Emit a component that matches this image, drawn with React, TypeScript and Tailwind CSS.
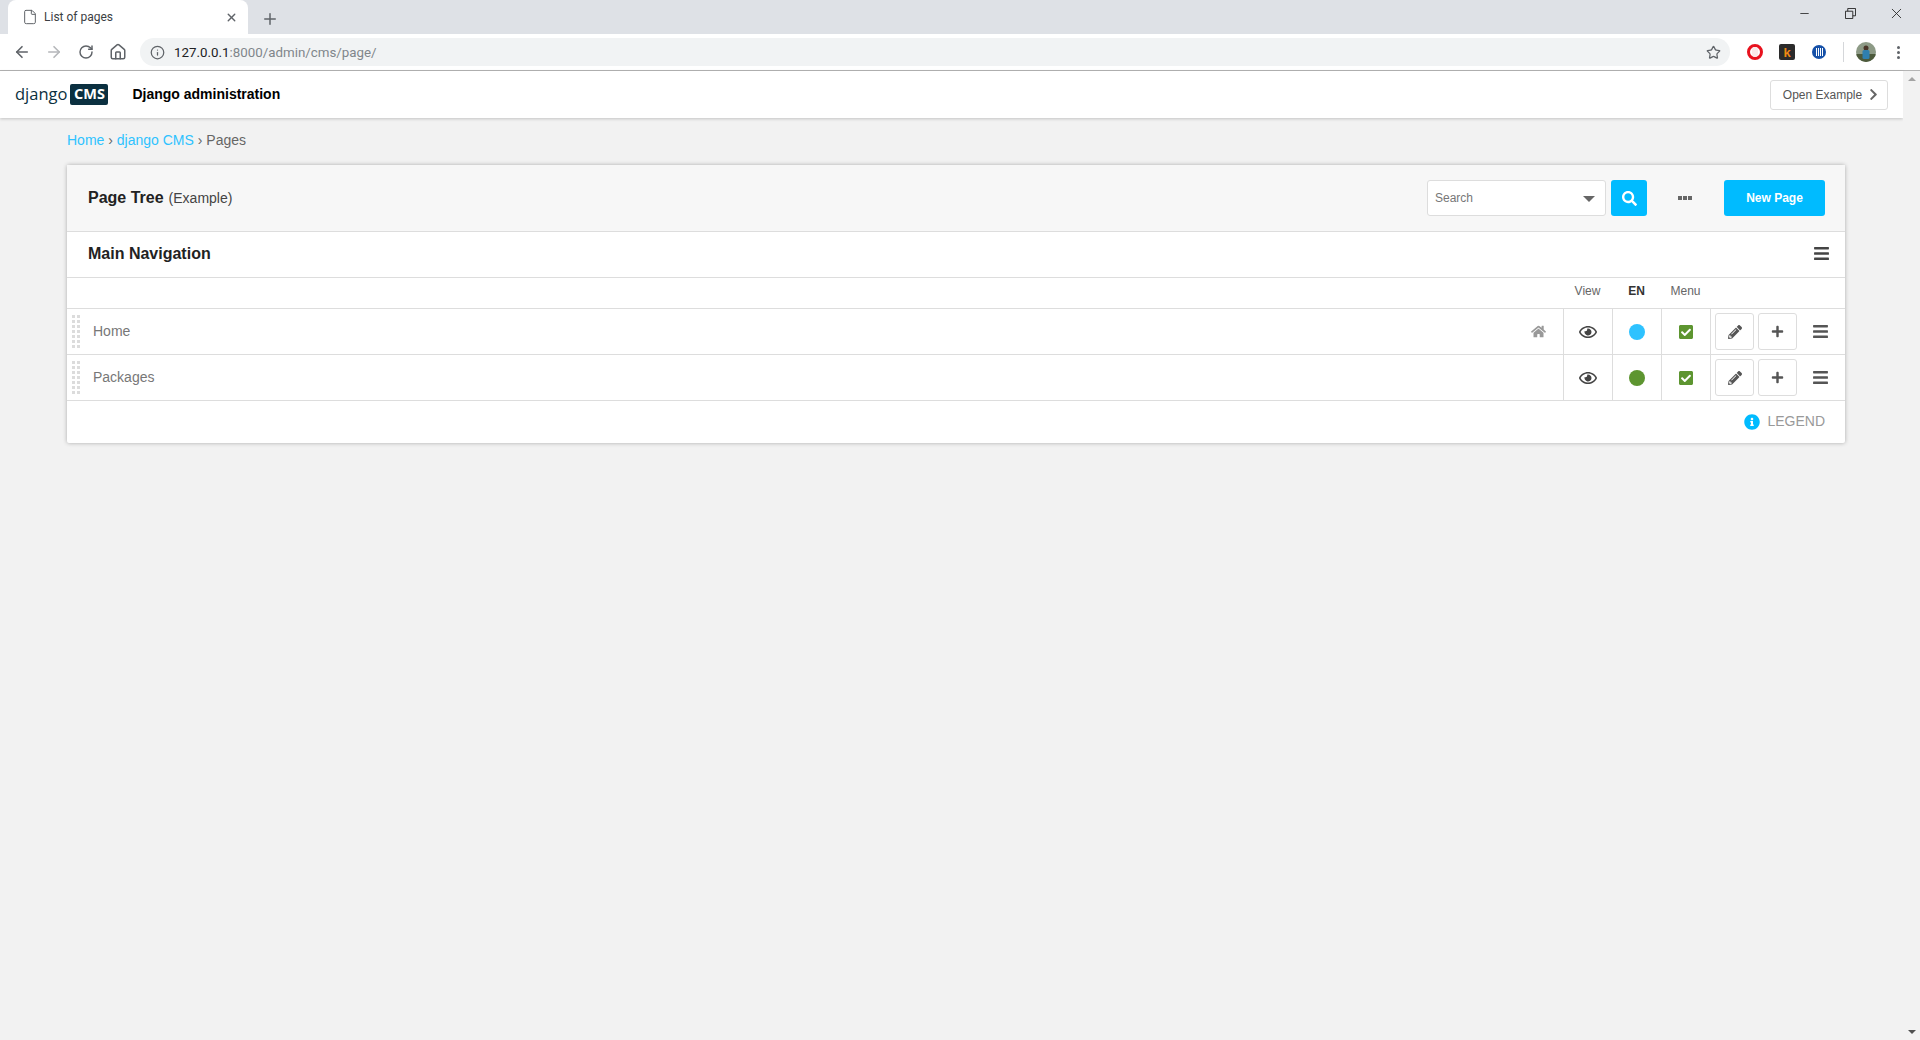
import { ArrowLeft, ArrowRight, File, Home, Info, Minus, Plus, RotateCw, Star, X } from "lucide-react";
import {
  FaBars,
  FaCheckSquare,
  FaChevronRight,
  FaHome,
  FaInfoCircle,
  FaPencilAlt,
  FaPlus,
  FaRegEye,
  FaSearch,
} from "react-icons/fa";

const sans = "font-['Liberation_Sans',Arial,sans-serif]";

// ─── Browser chrome ─────────────────────────────────────
function TabStrip() {
  return (
    <div className="flex h-[34px] items-end bg-[#dee1e6] pl-2">
      <div className="flex h-[34px] w-[240px] items-center rounded-t-[8px] bg-white pl-[14px] pr-[10px]">
        <File className="h-[16px] w-[16px] text-[#5f6368]" strokeWidth={1.5} />
        <span className="ml-[6px] flex-1 font-['Roboto',sans-serif] text-[12px] text-[#3c4043]">List of pages</span>
        <X className="h-[13px] w-[13px] text-[#5f6368]" strokeWidth={2.5} />
      </div>
      <Plus className="mb-[6px] ml-[13px] h-[18px] w-[18px] text-[#5f6368]" strokeWidth={2} />
      <div className="flex-1" />
      <div className="mb-[7px] flex items-center self-stretch">
        <Minus className="mr-[34px] h-[13px] w-[13px] text-[#222]" strokeWidth={1.5} />
        <svg viewBox="0 0 12 12" className="mr-[32px] h-[11px] w-[11px] text-[#222]" fill="none" stroke="currentColor">
          <path d="M.5 3.5h8v8h-8zM3 3.5V.5h8.5v8H8.5" />
        </svg>
        <X className="mr-[15px] h-[17px] w-[17px] text-[#222]" strokeWidth={1.2} />
      </div>
    </div>
  );
}

function ToolBar() {
  return (
    <div className="flex h-[37px] items-center border-b border-[#b4b4b4] bg-white pl-[13px]">
      <ArrowLeft className="h-[18px] w-[18px] text-[#5f6368]" strokeWidth={2.2} />
      <ArrowRight className="ml-[14px] h-[18px] w-[18px] text-[#b5b7ba]" strokeWidth={2.2} />
      <RotateCw className="ml-[15px] h-[16px] w-[16px] text-[#5f6368]" strokeWidth={2.2} />
      <Home className="ml-[15px] h-[18px] w-[18px] text-[#5f6368]" strokeWidth={2} />
      <div className="ml-[13px] flex h-[28px] w-[1590px] items-center rounded-full bg-[#f1f3f4] pl-[10px] pr-[9px]">
        <Info className="h-[15px] w-[15px] text-[#5f6368]" strokeWidth={2} />
        <span className="ml-[9px] mt-px flex-1 font-['Roboto',sans-serif] text-[13.33px] text-[#80868b]">
          <span className="text-[#202124]">127.0.0.1</span>:8000/admin/cms/page/
        </span>
        <Star className="h-[15px] w-[15px] text-[#5f6368]" strokeWidth={2} />
      </div>
      <div className="ml-[17px] flex h-[16px] w-[16px] items-center justify-center rounded-full border-[3px] border-[#e8121e] bg-white">
        <div className="h-[10px] w-[6px] rounded-full bg-[#fbeaea]" />
      </div>
      <div className="ml-[16px] flex h-[16px] w-[16px] items-center justify-center rounded-[2px] bg-[#2b2b2b] text-[13px] font-bold leading-none text-[#f08a12]">
        k
      </div>
      <div className="ml-[17px] flex h-[14px] w-[14px] items-center justify-center gap-px rounded-full bg-[#1550a8]">
        <div className="h-[8px] w-px bg-white" />
        <div className="h-[8px] w-px bg-white" />
        <div className="h-[8px] w-px bg-white" />
        <div className="h-[8px] w-px bg-white" />
      </div>
      <div className="ml-[17px] h-[20px] w-px bg-[#d5d7da]" />
      <svg viewBox="0 0 20 20" className="ml-[12px] h-[20px] w-[20px]">
        <clipPath id="avatar">
          <circle cx="10" cy="10" r="10" />
        </clipPath>
        <g clipPath="url(#avatar)">
          <rect width="20" height="20" fill="#8d9a86" />
          <rect y="12" width="20" height="8" fill="#4d5a3c" />
          <circle cx="10" cy="6" r="2.5" fill="#4a3428" />
          <rect x="6.5" y="8" width="7" height="9" rx="1.5" fill="#2f7fb0" />
        </g>
      </svg>
      <div className="ml-[21px] flex flex-col gap-[2px]">
        <div className="h-[3px] w-[3px] rounded-full bg-[#5f6368]" />
        <div className="h-[3px] w-[3px] rounded-full bg-[#5f6368]" />
        <div className="h-[3px] w-[3px] rounded-full bg-[#5f6368]" />
      </div>
    </div>
  );
}

// ─── Page tree ──────────────────────────────────────────
function DragHandle() {
  return (
    <div className="grid w-[8px] grid-cols-2 gap-x-[2px] gap-y-[2px] self-center">
      {Array.from({ length: 14 }).map((_, i) => (
        <div key={i} className="h-[3px] w-[3px] bg-[#dcdcdc]" />
      ))}
    </div>
  );
}

function IconButton({ children }: { children: React.ReactNode }) {
  return (
    <div className="flex h-[37px] w-[39px] items-center justify-center rounded-[3px] border border-[#ddd] bg-white text-[#555]">
      {children}
    </div>
  );
}

function TreeRow({ title, dot, home }: { title: string; dot: string; home?: boolean }) {
  return (
    <div className="flex h-[46px] border-b border-[#ddd]">
      <div className="ml-[5px] flex flex-1 items-center">
        <DragHandle />
        <span className="ml-[13px] flex-1 pb-px text-[14px] text-[#777]">{title}</span>
        {home && <FaHome className="mr-[17px] h-[15px] w-[15px] text-[#999]" />}
      </div>
      <div className="flex w-[49px] items-center justify-center border-l border-[#ddd]">
        <FaRegEye className="h-[18px] w-[18px] text-[#444]" />
      </div>
      <div className="flex w-[49px] items-center justify-center border-l border-[#ddd]">
        <div className={"h-[16px] w-[16px] rounded-full " + dot} />
      </div>
      <div className="flex w-[49px] items-center justify-center border-l border-[#ddd]">
        <FaCheckSquare className="h-[16px] w-[16px] text-[#5d9530]" />
      </div>
      <div className="flex w-[135px] items-center border-l border-[#ddd] pl-[4px]">
        <IconButton>
          <FaPencilAlt className="h-[14px] w-[14px]" />
        </IconButton>
        <div className="ml-[4px]">
          <IconButton>
            <FaPlus className="h-[13px] w-[13px]" />
          </IconButton>
        </div>
        <FaBars className="ml-[15px] h-[17px] w-[17px] text-[#555]" />
      </div>
    </div>
  );
}

function PageTree() {
  return (
    <div className="mr-[58px] ml-[67px] rounded-[2px] bg-white shadow-[0_0_4px_rgba(0,0,0,0.3)]">
      <div className="flex h-[67px] items-center border-b border-[#ddd] bg-[#f7f7f7] pl-[21px] pr-[20px]">
        <span className="text-[16px] font-bold text-[#222]">Page Tree</span>
        <span className="ml-[5px] flex-1 text-[14px] text-[#444]">(Example)</span>
        <div className="flex h-[36px] w-[179px] items-center rounded-[3px] border border-[#ddd] bg-white pl-[7px] pr-[10px]">
          <span className="flex-1 text-[12px] text-[#777]">Search</span>
          <div className="mt-[2px] h-0 w-0 border-x-[6px] border-t-[6px] border-x-transparent border-t-[#666]" />
        </div>
        <div className="ml-[5px] flex h-[36px] w-[36px] items-center justify-center rounded-[3px] bg-[#00bbff]">
          <FaSearch className="h-[15px] w-[15px] text-white" />
        </div>
        <div className="ml-[31px] flex gap-[1px]">
          <div className="h-[4px] w-[4px] bg-[#666]" />
          <div className="h-[4px] w-[4px] bg-[#666]" />
          <div className="h-[4px] w-[4px] bg-[#666]" />
        </div>
        <div className="ml-[32px] flex h-[36px] w-[101px] items-center justify-center rounded-[3px] bg-[#00bbff] text-[12px] font-bold text-white">
          New Page
        </div>
      </div>
      <div className="flex h-[46px] items-center border-b border-[#ddd] pb-[2px] pl-[21px] pr-[15px]">
        <span className="flex-1 text-[16px] font-bold text-[#222]">Main Navigation</span>
        <FaBars className="h-[17px] w-[17px] text-[#444]" />
      </div>
      <div className="flex h-[31px] items-center justify-end border-b border-[#ddd] pb-[4px] pr-[135px] text-[12px] text-[#666]">
        <span className="w-[49px] text-center">View</span>
        <span className="w-[49px] text-center font-bold text-[#333]">EN</span>
        <span className="w-[49px] text-center">Menu</span>
      </div>
      <TreeRow title="Home" dot="bg-[#2ec2ff]" home />
      <TreeRow title="Packages" dot="bg-[#5d9530]" />
      <div className="flex h-[42px] items-center justify-end pb-px pr-[20px]">
        <FaInfoCircle className="h-[16px] w-[16px] text-[#00bbff]" />
        <span className="ml-[7px] text-[14px] text-[#999]">LEGEND</span>
      </div>
    </div>
  );
}

export default function App() {
  return (
    <div className={sans + " flex h-[1040px] w-[1920px] flex-col overflow-hidden bg-[#f2f2f2]"}>
      <TabStrip />
      <ToolBar />
      <div className="flex flex-1">
        <div className="flex-1">
          <div className="flex h-[47px] items-center bg-white pl-[15px] pr-[15px] shadow-[0_1px_3px_rgba(0,0,0,0.2)]">
            <span className="font-['Open_Sans',sans-serif] text-[16.5px] leading-none text-[#0b3040]">django</span>
            <span className="ml-[3px] flex h-[21px] w-[38px] items-center justify-center rounded-[2px] bg-[#0b3040] font-['Open_Sans',sans-serif] text-[14.5px] font-bold leading-none text-white">
              CMS
            </span>
            <span className="ml-[24px] flex-1 text-[14px] font-bold text-black">Django administration</span>
            <div className="flex h-[30px] w-[118px] items-center justify-center gap-[5px] rounded-[3px] border border-[#ddd] pl-[5px] text-[12px] text-[#555]">
              Open Example
              <FaChevronRight className="h-[13px] w-[13px] text-[#666]" />
            </div>
          </div>
          <div className="mb-[15px] mt-[12px] pl-[67px] text-[14px] leading-[20px] text-[#666]">
            <span className="text-[#2ec2ff]">Home</span> › <span className="text-[#2ec2ff]">django CMS</span> › Pages
          </div>
          <PageTree />
        </div>
        <div className="flex w-[17px] flex-col items-center justify-between bg-[#f2f2f2] py-[6px]">
          <div className="h-0 w-0 border-x-[4px] border-b-[4px] border-x-transparent border-b-[#a3a3a3]" />
          <div className="h-0 w-0 border-x-[4px] border-t-[4px] border-x-transparent border-t-[#505050]" />
        </div>
      </div>
    </div>
  );
}
